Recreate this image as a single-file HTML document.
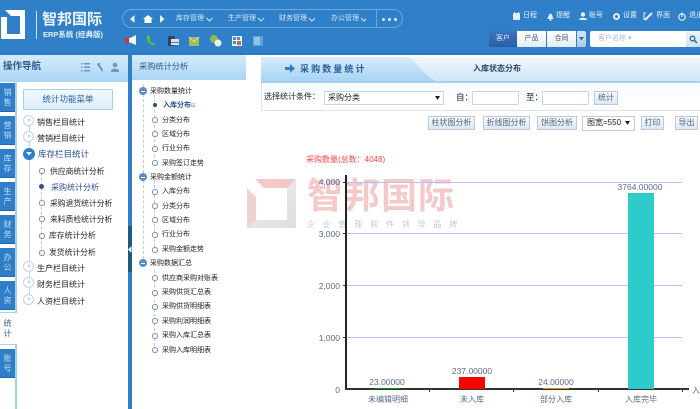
<!DOCTYPE html>
<html lang="zh"><head><meta charset="utf-8"><title>采购数量统计</title>
<style>
html,body{margin:0;padding:0;background:#fff}
#p{position:relative;width:700px;height:409px;overflow:hidden;background:#fff;font-family:"Liberation Sans","Noto Sans CJK SC",sans-serif;font-size:8px;color:#222;filter:blur(.3px)}
#p div,#p svg{position:absolute}
.t{white-space:nowrap;line-height:10px}
.m{font-size:7px;color:#222}
.hd{color:#d5e6f5;font-size:7px;white-space:nowrap;line-height:10px}
.tab{left:0;width:15px;background:#2f7fc8;color:#c5ddf2;font-size:8px;line-height:10px;text-align:center;box-sizing:border-box;padding:5px 3px 0 3px;border-bottom:1px solid #1f69ad}
.btn{background:linear-gradient(#f7fafd,#dde7f3);border:1px solid #bcc9dc;box-sizing:border-box;height:14px;line-height:12px;text-align:center;color:#4f6484;font-size:8px;white-space:nowrap}
.inp{background:#fff;border:1px solid #c9d5e4;box-sizing:border-box;height:14px;border-radius:1px}
.grid{left:346px;width:336px;height:1px;background:#bcbcf8}
.yl{width:32px;left:308px;text-align:right;color:#5a6b8a;font-size:8.500px;line-height:10px}
.xl{color:#5a6b8a;font-size:8px;line-height:10px;white-space:nowrap;text-align:center;width:60px}
.vl{color:#5a6b8a;font-size:8.500px;line-height:10px;white-space:nowrap;text-align:center;width:60px}
.c1{width:9px;height:9px;border:1.500px solid #c3d3e8;border-radius:50%;background:#fff}
.c1:after{content:"";position:absolute;left:3.500px;top:2px;border-left:3px solid #c3d3e8;border-top:2.500px solid transparent;border-bottom:2.500px solid transparent}
.c2{width:3.500px;height:3.500px;border:1.200px solid #7a93c0;border-radius:50%;background:#fff}
.mn{width:8px;height:8px;border-radius:50%;background:#5c8bd0}
.mn:after{content:"";position:absolute;left:2px;top:3.500px;width:4px;height:1px;background:#fff}
</style></head><body><div id="p">

<!-- header -->
<div style="left:0;top:0;width:700px;height:55px;background:#2f80c8"></div>
<div style="left:0;top:53px;width:700px;height:1px;background:#2a76bb"></div>
<svg style="left:0;top:9px" width="27" height="31" viewBox="0 0 27 31"><path d="M5 1H25V30H1V8H7V25H20V7H11Z" fill="#fff"/></svg>
<div style="left:36px;top:11px;width:1px;height:28px;background:#cfe2f3"></div>
<div class="t" style="left:42px;top:11px;font-size:15px;font-weight:bold;color:#eef6fc;line-height:17px">智邦国际</div>
<div class="t" style="left:43px;top:30px;font-size:7.500px;color:#e4eff8;font-weight:bold">ERP系统 (经典版)</div>

<div style="left:122px;top:9px;width:281px;height:19px;border:1px solid #6ba6dc;border-radius:10px;box-sizing:border-box"></div>
<div style="left:376px;top:9px;width:1px;height:19px;background:#6ba6dc"></div>
<svg style="left:129px;top:14px" width="38" height="10" viewBox="0 0 38 10"><path d="M5.500 1V9L1 5Z" fill="#e8f2fb"/><path d="M14 5L19 1 24 5H22.500V9H15.500V5Z" fill="#fff"/><path d="M31 1V9L35.500 5Z" fill="#e8f2fb"/></svg>
<div class="hd" style="left:176px;top:14px">库存管理</div>
<div class="hd" style="left:228px;top:14px">生产管理</div>
<div class="hd" style="left:279px;top:14px">财务管理</div>
<div class="hd" style="left:331px;top:14px">办公管理</div>
<svg style="left:206px;top:17px" width="160" height="6" viewBox="0 0 160 6"><g fill="none" stroke="#d5e6f5" stroke-width="1"><path d="M0.500 1L3.500 4 6.500 1"/><path d="M52 1L55 4 58 1"/><path d="M103 1L106 4 109 1"/><path d="M155 1L158 4 161 1"/></g></svg>
<div style="left:382px;top:17.500px;width:3px;height:3px;border-radius:50%;background:#dcebf8;box-shadow:6px 0 0 #dcebf8,12px 0 0 #dcebf8"></div>

<!-- toolbar icons -->
<svg style="left:124px;top:34px" width="140" height="14" viewBox="0 0 140 14">
<path d="M2 4H6L12 1V11L6 8.500H2Z" fill="#f2f4f6"/><path d="M1 4H5V9H1Z" fill="#d8303a"/>
<path d="M23 1.500C22 6 24 10 30 11.500L31 10 28.500 8.500 27.500 9C26.500 8 25.500 6.500 25.500 5.500L26.500 5 25.500 1.500Z" fill="#66c02a"/>
<rect x="44" y="2" width="7" height="10" rx="1" fill="#34435a"/><rect x="47" y="5" width="8" height="6" fill="#d8e4ef"/><rect x="47" y="8" width="8" height="1" fill="#4a82b8"/>
<rect x="65" y="3" width="10" height="9" fill="#a6ba5a"/><path d="M65 3L70 8 75 3" fill="none" stroke="#d9e09a"/>
<circle cx="90" cy="5" r="4" fill="#90b84a"/><circle cx="94" cy="9" r="3.500" fill="#eef3f6"/>
<rect x="108" y="2" width="10" height="10" fill="#eaf3fa"/><rect x="109" y="3" width="3" height="3" fill="#4a90c8"/><rect x="113" y="3" width="3" height="3" fill="#4a90c8"/><rect x="109" y="7" width="3" height="3" fill="#4a90c8"/><rect x="113" y="7" width="4" height="4" fill="#c07030"/>
<rect x="129" y="2" width="10" height="10" fill="#5ba2d6"/><rect x="130" y="3" width="6" height="8" fill="#8ec4e8"/>
</svg>

<!-- top right links -->
<svg style="left:512px;top:11px" width="188" height="11" viewBox="0 0 188 11">
<rect x="1" y="2" width="7" height="7" rx="1" fill="#e6f0f9"/><rect x="2" y="1" width="1" height="2" fill="#e6f0f9"/><rect x="6" y="1" width="1" height="2" fill="#e6f0f9"/>
<path d="M35 8C37 7 36 3 38.500 2.500 41 3 40 7 42 8Z" fill="#e6f0f9"/><circle cx="38.500" cy="9" r="1" fill="#e6f0f9"/>
<circle cx="71" cy="3.500" r="2.200" fill="#e6f0f9"/><path d="M67 9C67 6 75 6 75 9Z" fill="#e6f0f9"/>
<circle cx="104.500" cy="5.500" r="2.500" fill="none" stroke="#e6f0f9" stroke-width="2"/>
<path d="M133 9L140 2" stroke="#e6f0f9" stroke-width="2"/><path d="M134 2H132V9" fill="none" stroke="#e6f0f9"/>
<circle cx="170" cy="6" r="3.200" fill="none" stroke="#e6f0f9" stroke-width="1.200"/><path d="M170 1.500V6" stroke="#e6f0f9" stroke-width="1.200"/>
</svg>
<div class="hd" style="left:523px;top:11px;color:#e6f0f9">日程</div>
<div class="hd" style="left:556px;top:11px;color:#e6f0f9">提醒</div>
<div class="hd" style="left:589px;top:11px;color:#e6f0f9">账号</div>
<div class="hd" style="left:623px;top:11px;color:#e6f0f9">设置</div>
<div class="hd" style="left:656px;top:11px;color:#e6f0f9">界面</div>
<div class="hd" style="left:689px;top:11px;color:#e6f0f9">退出</div>

<div style="left:489px;top:31px;width:28px;height:16px;background:linear-gradient(#3e74bb,#2a5ea8);color:#dce9f6;text-align:center;line-height:16px;border-radius:2px 0 0 2px;font-size:7px">客户</div>
<div style="left:517px;top:31px;width:29px;height:16px;background:linear-gradient(#fff,#e2edf7);color:#556;text-align:center;line-height:16px;font-size:7px">产品</div>
<div style="left:547px;top:31px;width:29px;height:16px;background:linear-gradient(#fff,#e2edf7);color:#556;text-align:center;line-height:16px;font-size:7px">合同</div>
<div style="left:577px;top:31px;width:9px;height:16px;background:linear-gradient(#d6e6f4,#a9cbe8);border-radius:0 2px 2px 0"></div>
<svg style="left:579px;top:37px" width="5" height="4"><path d="M0 0H5L2.500 3.500Z" fill="#2a6cad"/></svg>
<div style="left:590px;top:31px;width:96px;height:16px;background:#fff;color:#a9b6c8;line-height:16px;padding-left:8px;box-sizing:border-box;border-radius:2px 0 0 2px;font-size:7px">客户名称 ▾</div>
<div style="left:686px;top:31px;width:14px;height:16px;background:linear-gradient(#eef5fb,#cfe2f2)"></div>
<svg style="left:689px;top:35px" width="9" height="9"><circle cx="3.500" cy="3.500" r="2.300" fill="none" stroke="#246aa8" stroke-width="1.300"/><path d="M5 5L8 8" stroke="#246aa8" stroke-width="1.500"/></svg>

<!-- left nav -->
<div style="left:0;top:55px;width:128px;height:27px;background:linear-gradient(#d7ebfb,#a9d5f6)"></div>
<div class="t" style="left:3px;top:61px;font-size:9.500px;font-weight:bold;color:#2d5a8c;line-height:12px">操作导航</div>
<svg style="left:80px;top:62px" width="42" height="11" viewBox="0 0 42 11"><g fill="#6d97c2"><rect x="1" y="1" width="1.500" height="1.500"/><rect x="4" y="1" width="6" height="1.500"/><rect x="1" y="4.500" width="1.500" height="1.500"/><rect x="4" y="4.500" width="6" height="1.500"/><rect x="1" y="8" width="1.500" height="1.500"/><rect x="4" y="8" width="6" height="1.500"/><path d="M18 1L20 1 20 3 23 8 22 10 19 5 17 3Z"/><circle cx="35" cy="3" r="2.300"/><path d="M31 9C31 6 39 6 39 9V10H31Z"/></g></svg>

<div style="left:15px;top:82px;width:2px;height:327px;background:#a8d0ef"></div>
<div class="tab" style="top:83px;height:29px">销售</div>
<div class="tab" style="top:116px;height:29px">营销</div>
<div class="tab" style="top:149px;height:29px">库存</div>
<div class="tab" style="top:182px;height:29px">生产</div>
<div class="tab" style="top:215px;height:29px">财务</div>
<div class="tab" style="top:248px;height:29px">办公</div>
<div class="tab" style="top:281px;height:29px">人资</div>
<div class="tab" style="top:312px;height:33px;background:#fff;color:#2d5a8c;padding-top:6px;border:0;border-top:1px solid #a8d0ef;border-bottom:1px solid #a8d0ef;width:17px;padding-right:5px">统计</div>
<div class="tab" style="top:349px;height:29px">账号</div>

<div style="left:23px;top:89px;width:90px;height:21px;background:linear-gradient(#f2f9fe,#dcedfa);border:1px solid #a9cfee;box-sizing:border-box;text-align:center;line-height:19px;color:#2b5f98;font-size:8.500px">统计功能菜单</div>

<div style="left:29px;top:125px;width:1px;height:178px;background:#c3d3e8"></div>
<div style="left:41px;top:168px;width:0;height:86px;border-left:1px dashed #b9c6da"></div>
<div class="c1" style="left:23px;top:115px"></div>
<div class="t" style="left:37px;top:118px">销售栏目统计</div>
<div class="c1" style="left:23px;top:131px"></div>
<div class="t" style="left:37px;top:134px">营销栏目统计</div>
<div style="left:23px;top:148px;width:12px;height:12px;border-radius:50%;background:#2f7fc8"></div><svg style="left:26px;top:152px" width="6" height="4"><path d="M0 0H6L3 3.500Z" fill="#fff"/></svg>
<div class="t" style="left:38px;top:149px;color:#2b4f8f;font-size:8.500px">库存栏目统计</div>
<div class="c2" style="left:39px;top:168px"></div><div class="t" style="left:50px;top:167px;font-size:7.800px">供应商统计分析</div>
<div style="left:39px;top:184px;width:5px;height:5px;border-radius:50%;background:#2b4f8f"></div><div class="t" style="left:51px;top:183px;color:#2b4f8f">采购统计分析</div>
<div class="c2" style="left:39px;top:200px"></div><div class="t" style="left:50px;top:199px;font-size:7.800px">采购退货统计分析</div>
<div class="c2" style="left:39px;top:216px"></div><div class="t" style="left:50px;top:215px;font-size:7.800px">来料质检统计分析</div>
<div class="c2" style="left:39px;top:233px"></div><div class="t" style="left:49px;top:231px;font-size:7.800px">库存统计分析</div>
<div class="c2" style="left:39px;top:250px"></div><div class="t" style="left:49px;top:248px;font-size:7.800px">发货统计分析</div>
<div class="c1" style="left:23px;top:261px"></div>
<div class="t" style="left:37px;top:264px">生产栏目统计</div>
<div class="c1" style="left:23px;top:277px"></div>
<div class="t" style="left:37px;top:280px">财务栏目统计</div>
<div class="c1" style="left:23px;top:294px"></div>
<div class="t" style="left:37px;top:297px">人资栏目统计</div>

<!-- splitter -->
<div style="left:128px;top:55px;width:4px;height:354px;background:#2f80c8"></div>
<div style="left:128px;top:226px;width:4px;height:46px;background:#1c5a80"></div>
<svg style="left:128px;top:246px" width="4" height="7"><path d="M3.500 0V7L0 3.500Z" fill="#e8f2fb"/></svg>

<!-- middle panel -->
<div style="left:132px;top:55px;width:114px;height:25px;background:linear-gradient(#d7ebfb,#a9d5f6)"></div>
<div class="t" style="left:139px;top:61px;font-size:8.200px;color:#2d5a8c;line-height:11px">采购统计分析</div>
<div style="left:143px;top:84px;width:0;height:180px;border-left:1px dashed #c4c9d2"></div>
<div style="left:154px;top:95px;width:0;height:62px;border-left:1px dashed #c4c9d2"></div>
<div style="left:154px;top:180px;width:0;height:72px;border-left:1px dashed #c4c9d2"></div>
<div style="left:154px;top:270px;width:0;height:76px;border-left:1px dashed #c4c9d2"></div>
<div class="mn" style="left:139px;top:87px"></div><div class="t m" style="left:150px;top:87px">采购数量统计</div>
<div style="left:153px;top:103px;width:4px;height:4px;border-radius:50%;background:#2b4f8f"></div><div class="t m" style="left:163px;top:101px;color:#2b4f8f;font-weight:bold">入库分布<span style="font-size:5px;font-weight:normal">☑</span></div>
<div class="c2" style="left:152px;top:117px"></div><div class="t m" style="left:162px;top:116px">分类分布</div>
<div class="c2" style="left:152px;top:131px"></div><div class="t m" style="left:162px;top:130px">区域分布</div>
<div class="c2" style="left:152px;top:146px"></div><div class="t m" style="left:162px;top:144px">行业分布</div>
<div class="c2" style="left:152px;top:160px"></div><div class="t m" style="left:162px;top:159px">采购签订走势</div>
<div class="mn" style="left:139px;top:173px"></div><div class="t m" style="left:150px;top:173px">采购金额统计</div>
<div class="c2" style="left:152px;top:189px"></div><div class="t m" style="left:162px;top:187px">入库分布</div>
<div class="c2" style="left:152px;top:203px"></div><div class="t m" style="left:162px;top:202px">分类分布</div>
<div class="c2" style="left:152px;top:217px"></div><div class="t m" style="left:162px;top:216px">区域分布</div>
<div class="c2" style="left:152px;top:232px"></div><div class="t m" style="left:162px;top:230px">行业分布</div>
<div class="c2" style="left:152px;top:247px"></div><div class="t m" style="left:162px;top:245px">采购金额走势</div>
<div class="mn" style="left:139px;top:259px"></div><div class="t m" style="left:150px;top:259px">采购数据汇总</div>
<div class="c2" style="left:152px;top:275px"></div><div class="t m" style="left:162px;top:274px">供应商采购对账表</div>
<div class="c2" style="left:152px;top:290px"></div><div class="t m" style="left:162px;top:288px">采购供货汇总表</div>
<div class="c2" style="left:152px;top:304px"></div><div class="t m" style="left:162px;top:302px">采购供货明细表</div>
<div class="c2" style="left:152px;top:318px"></div><div class="t m" style="left:162px;top:317px">采购利润明细表</div>
<div class="c2" style="left:152px;top:333px"></div><div class="t m" style="left:162px;top:331px">采购入库汇总表</div>
<div class="c2" style="left:152px;top:347px"></div><div class="t m" style="left:162px;top:346px">采购入库明细表</div>

<!-- right tabs -->
<div style="left:261px;top:57px;width:439px;height:25px;background:linear-gradient(#eef7fd,#cfe6f7)"></div>
<svg style="left:261px;top:55px" width="183" height="27" viewBox="0 0 183 27"><defs><linearGradient id="g" x1="0" y1="0" x2="0" y2="1"><stop offset="0" stop-color="#d8ecfb"/><stop offset="1" stop-color="#a5d2f5"/></linearGradient></defs><path d="M0 2H142C157 2 162 24 179 27H0Z" fill="url(#g)"/></svg>
<div style="left:261px;top:81px;width:439px;height:2px;background:#a9d0ef"></div>
<svg style="left:285px;top:64px" width="11" height="9"><path d="M0 3H5V0L10 4.500 5 9V6H0Z" fill="#2f80c8"/></svg>
<div class="t" style="left:300px;top:64px;font-size:9px;color:#2b5f98;letter-spacing:2.100px;font-weight:bold;line-height:11px">采购数量统计</div>
<div class="t" style="left:473px;top:63px;font-size:8px;color:#2c4462;line-height:11px;font-weight:bold">入库状态分布</div>

<!-- filter -->
<div style="left:261px;top:83px;width:439px;height:28px;background:linear-gradient(#f6fbfe,#fff);border-bottom:1px solid #dbe4ef;border-left:1px solid #dbe4ef;box-sizing:border-box"></div>
<div class="t" style="left:264px;top:92px;font-size:8px">选择统计条件：</div>
<div class="inp" style="left:324px;top:91px;width:120px;padding-left:3px;line-height:12px">采购分类</div>
<svg style="left:435px;top:96px" width="5" height="4"><path d="M0 0H5L2.500 4Z" fill="#222"/></svg>
<div class="t" style="left:456px;top:92px;font-size:8.500px">自：</div>
<div class="inp" style="left:472px;top:91px;width:47px"></div>
<div class="t" style="left:526px;top:92px;font-size:8.500px">至：</div>
<div class="inp" style="left:542px;top:91px;width:47px"></div>
<div class="btn" style="left:594px;top:91px;width:24px">统计</div>

<div class="btn" style="left:428px;top:116px;width:47px">柱状图分析</div>
<div class="btn" style="left:483px;top:116px;width:47px">折线图分析</div>
<div class="btn" style="left:537px;top:116px;width:40px">饼图分析</div>
<div class="inp" style="left:582px;top:116px;width:53px;height:15px;line-height:12px;padding-left:4px;border-color:#c4cad8;font-size:8px">图宽=550</div>
<svg style="left:625px;top:121px" width="5" height="4"><path d="M0 0H5L2.500 4Z" fill="#222"/></svg>
<div class="btn" style="left:641px;top:116px;width:23px">打印</div>
<div class="btn" style="left:675px;top:116px;width:23px">导出</div>

<div class="t" style="left:306px;top:155px;color:#f44;font-size:8px">采购数量(总数：4048)</div>

<!-- watermark -->
<svg style="left:247px;top:179px" width="50" height="50" viewBox="0 0 50 50"><defs><linearGradient id="w" x1="0" y1="0" x2="1" y2="1"><stop offset="0" stop-color="#f0eded"/><stop offset="1" stop-color="#dedede"/></linearGradient></defs><path d="M49 0L40 9V41H8L0 49H49Z" fill="url(#w)"/><path d="M8 0H49L40 9H17Z" fill="#f2c8c8"/><path d="M0 9L9 18V41L0 49Z" fill="#f0d0d0"/></svg>
<div class="t" style="left:307px;top:174px;font-size:36px;line-height:44px;color:#f3c9c9;font-weight:bold;letter-spacing:1px">智邦国际</div>
<div class="t" style="left:307px;top:220px;font-size:8px;color:#c8c8c8;letter-spacing:7.800px">企业管理软件领导品牌</div>

<!-- chart -->
<div class="grid" style="top:182px"></div>
<div class="grid" style="top:233px"></div>
<div class="grid" style="top:285px"></div>
<div class="grid" style="top:337px"></div>
<div style="left:345px;top:175px;width:1.500px;height:215px;background:#222"></div>
<div style="left:345px;top:388px;width:344px;height:1.500px;background:#333"></div>
<div style="left:343px;top:182px;width:2px;height:1px;background:#333"></div>
<div style="left:343px;top:233px;width:2px;height:1px;background:#333"></div>
<div style="left:343px;top:285px;width:2px;height:1px;background:#333"></div>
<div style="left:343px;top:337px;width:2px;height:1px;background:#333"></div>
<div style="left:429px;top:389px;width:1px;height:3px;background:#333"></div>
<div style="left:513px;top:389px;width:1px;height:3px;background:#333"></div>
<div style="left:598px;top:389px;width:1px;height:3px;background:#333"></div>
<div style="left:682px;top:389px;width:1px;height:3px;background:#333"></div>
<div class="yl" style="top:177px">4,000</div>
<div class="yl" style="top:229px">3,000</div>
<div class="yl" style="top:281px">2,000</div>
<div class="yl" style="top:333px">1,000</div>
<div class="yl" style="top:385px">0</div>
<div style="left:374px;top:387.500px;width:26px;height:1.500px;background:#0a8a0a"></div>
<div style="left:459px;top:377px;width:26px;height:12px;background:#f00"></div>
<div style="left:543px;top:387.500px;width:26px;height:1.500px;background:#e08a00"></div>
<div style="left:628px;top:193px;width:26px;height:196px;background:#2ecbcb"></div>
<div class="vl" style="left:357px;top:377px">23.00000</div>
<div class="vl" style="left:442px;top:366px">237.00000</div>
<div class="vl" style="left:526px;top:377px">24.00000</div>
<div class="vl" style="left:611px;top:182px;width:58px">3764.00000</div>
<div class="xl" style="left:358px;top:395px">未编辑明细</div>
<div class="xl" style="left:442px;top:395px">未入库</div>
<div class="xl" style="left:526px;top:395px">部分入库</div>
<div class="xl" style="left:611px;top:395px">入库完毕</div>
<div class="t" style="left:692px;top:386px;color:#5a6b8a">入</div>
</div></body></html>
